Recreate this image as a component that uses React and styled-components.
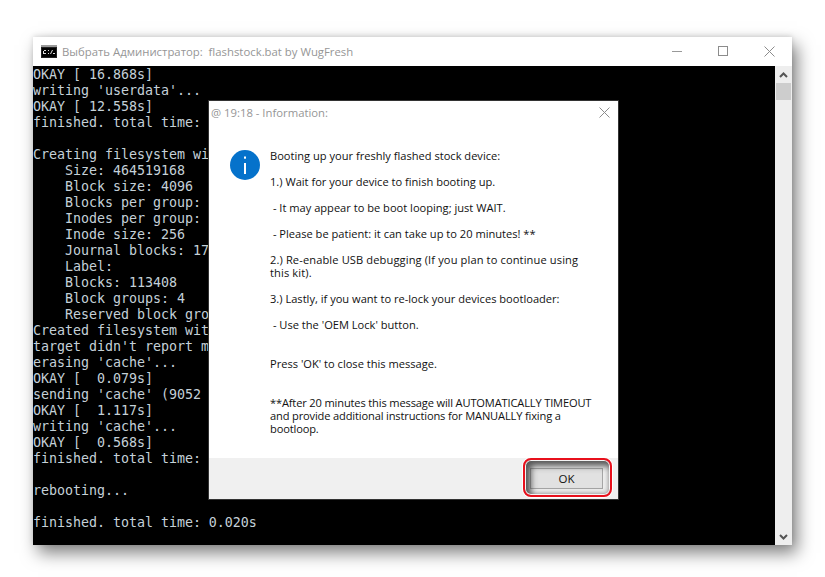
import React from "react";
import styled, { createGlobalStyle } from "styled-components";

const Global = createGlobalStyle`
  html, body { margin: 0; padding: 0; background: #fff; }
  body { width: 825px; height: 577px; overflow: hidden; }
`;

const Stage = styled.div`
  width: 825px;
  height: 577px;
  padding: 37px 33px 32px 33px;
  box-sizing: border-box;
`;

const Window = styled.div`
  width: 759px;
  height: 508px;
  display: flex;
  flex-direction: column;
  background: #fff;
  box-shadow: 5px 8px 16px rgba(0,0,0,.5), 0 -1px 5px rgba(0,0,0,.12);
`;

const TitleBar = styled.div`
  height: 29px;
  display: flex;
  align-items: center;
  padding-left: 8px;
  font: 11.35px "Open Sans", "Noto Sans", sans-serif;
  color: #969696;
`;

const TitleText = styled.span`
  margin-left: 5px;
  white-space: pre;
`;

const WinButtons = styled.div`
  margin-left: auto;
  display: flex;
  height: 100%;
  align-items: center;
`;

const WinButton = styled.div`
  width: 46px;
  display: flex;
  justify-content: center;
  align-items: center;
`;

const Body = styled.div`
  flex: 1;
  display: flex;
  position: relative;
  min-height: 0;
`;

const Console = styled.pre`
  flex: 1;
  margin: 0;
  padding-top: 1px;
  background: #000;
  color: #c4d0d8;
  font: 13.33px/16px "DejaVu Sans Mono", monospace;
  letter-spacing: -0.03px;
  overflow: hidden;
`;

const ScrollBar = styled.div`
  width: 17px;
  display: flex;
  flex-direction: column;
  background: #eee;
  align-items: center;
`;

const Arrow = styled.div`
  height: 17px;
  display: flex;
  align-items: center;
  justify-content: center;
`;

const Thumb = styled.div`
  width: 15px;
  height: 17px;
  background: #cdcdcd;
  margin-bottom: auto;
`;

const Dialog = styled.div`
  position: absolute;
  left: 175px;
  top: 34px;
  width: 411px;
  height: 400px;
  box-sizing: border-box;
  border: 1px solid #333;
  background: #fff;
  display: flex;
  flex-direction: column;
`;

const DialogHead = styled.div`
  height: 22px;
  display: flex;
  align-items: center;
  padding: 0 8px 0 2px;
  font: 11.3px "Open Sans", "Noto Sans", sans-serif;
  color: #969696;
  justify-content: space-between;
`;

const DialogBody = styled.div`
  flex: 1;
  min-height: 0;
  display: flex;
  padding: 27px 0 0 21px;
  gap: 10px;
`;

const Message = styled.div`
  width: 340px;
  margin-top: -1px;
  font: 11.1px/13px "Open Sans", "Noto Sans", sans-serif;
  color: #111;
`;

const Para = styled.p`
  margin: 0 0 13px;
  white-space: pre-wrap;
  letter-spacing: ${(p) => p.$track || 0}px;
`;

const BlankLine = styled.div`
  height: 13px;
`;

const DialogFoot = styled.div`
  height: 41px;
  background: #f0f0f0;
  display: flex;
  align-items: center;
  justify-content: flex-end;
  padding-right: 15px;
`;

const OkButton = styled.button`
  position: relative;
  width: 73px;
  height: 21px;
  box-sizing: border-box;
  border: 1px solid #a6a6a6;
  background: #e1e1e1;
  font: 11.5px "Open Sans", "Noto Sans", sans-serif;
  color: #111;
  padding: 0;
  &::after {
    content: "";
    position: absolute;
    inset: -11px -10px -9px -8px;
    border-radius: 8px;
    border: 2px solid #e8101c;
    box-shadow: 0 0 0 1px #fff, inset 0 0 0 1px #f4f4f4, inset 3px 3px 6px 3px rgba(60,60,60,.85);
  }
`;

const InfoIcon = () => (
  <svg width="30" height="30" viewBox="0 0 30 30" style={{ flex: "none" }}>
    <circle cx="15" cy="15" r="15" fill="#0572cb" />
    <rect x="14" y="6.5" width="2" height="2.2" fill="#fff" />
    <rect x="14" y="13" width="2" height="11" fill="#fff" />
  </svg>
);

const CmdIcon = () => (
  <svg width="16" height="13" viewBox="0 0 16 13">
    <rect width="16" height="13" fill="#222" />
    <rect x="0" y="0" width="16" height="2" fill="#9a9a9a" />
    <rect x="1" y="3" width="14" height="9" fill="#000" />
    <path d="M3 5h2v1H3v2h2v1H2V6h1zM7 5h1v1H7zM7 8h1v1H7zM9 9l2-4h1l-2 4zM12 9h2v-1h-2z" fill="#ddd" />
  </svg>
);

const Close = ({ size = 11 }) => (
  <svg width={size} height={size} viewBox="0 0 11 11">
    <path d="M.5.5l10 10M10.5.5l-10 10" stroke="#8c8c8c" strokeWidth="1" fill="none" />
  </svg>
);

const consoleText = `OKAY [ 16.868s]
writing 'userdata'...
OKAY [ 12.558s]
finished. total time:

Creating filesystem with
    Size: 464519168
    Block size: 4096
    Blocks per group:
    Inodes per group:
    Inode size: 256
    Journal blocks: 17
    Label:
    Blocks: 113408
    Block groups: 4
    Reserved block gro
Created filesystem with
target didn't report m
erasing 'cache'...
OKAY [  0.079s]
sending 'cache' (9052
OKAY [  1.117s]
writing 'cache'...
OKAY [  0.568s]
finished. total time:

rebooting...

finished. total time: 0.020s`;

const before = [
  { text: "Booting up your freshly flashed stock device:" },
  { text: "1.) Wait for your device to finish booting up." },
  { text: " - It may appear to be boot looping; just WAIT." },
  { text: " - Please be patient: it can take up to 20 minutes! **" },
  { text: "2.) Re-enable USB debugging (If you plan to continue using\nthis kit).", track: 0.12 },
  { text: "3.) Lastly, if you want to re-lock your devices bootloader:" },
  { text: " - Use the 'OEM Lock' button." },
];

export default function App() {
  return (
    <Stage>
      <Global />
      <Window>
        <TitleBar>
          <CmdIcon />
          <TitleText>Выбрать Администратор:  flashstock.bat by WugFresh</TitleText>
          <WinButtons>
            <WinButton>
              <svg width="11" height="11" viewBox="0 0 11 11"><path d="M0 5.5h10" stroke="#999" /></svg>
            </WinButton>
            <WinButton>
              <svg width="11" height="11" viewBox="0 0 11 11"><rect x=".5" y=".5" width="9" height="9" fill="none" stroke="#8c8c8c" /></svg>
            </WinButton>
            <WinButton><Close /></WinButton>
          </WinButtons>
        </TitleBar>
        <Body>
          <Console>{consoleText}</Console>
          <ScrollBar>
            <Arrow>
              <svg width="9" height="6" viewBox="0 0 9 6"><path d="M1 5l3.5-3.5L8 5" stroke="#555" strokeWidth="2" fill="none" /></svg>
            </Arrow>
            <Thumb />
            <Arrow>
              <svg width="9" height="6" viewBox="0 0 9 6"><path d="M1 1l3.5 3.5L8 1" stroke="#555" strokeWidth="2" fill="none" /></svg>
            </Arrow>
          </ScrollBar>
          <Dialog>
            <DialogHead>
              <span>@ 19:18 - Information:</span>
              <Close />
            </DialogHead>
            <DialogBody>
              <InfoIcon />
              <Message>
                {before.map((p, i) => <Para key={i} $track={p.track}>{p.text}</Para>)}
                <BlankLine />
                <Para>Press 'OK' to close this message.</Para>
                <BlankLine />
                <Para $track={-0.15}>{"**After 20 minutes this message will AUTOMATICALLY TIMEOUT\nand provide additional instructions for MANUALLY fixing a\nbootloop."}</Para>
              </Message>
            </DialogBody>
            <DialogFoot>
              <OkButton>OK</OkButton>
            </DialogFoot>
          </Dialog>
        </Body>
      </Window>
    </Stage>
  );
}
